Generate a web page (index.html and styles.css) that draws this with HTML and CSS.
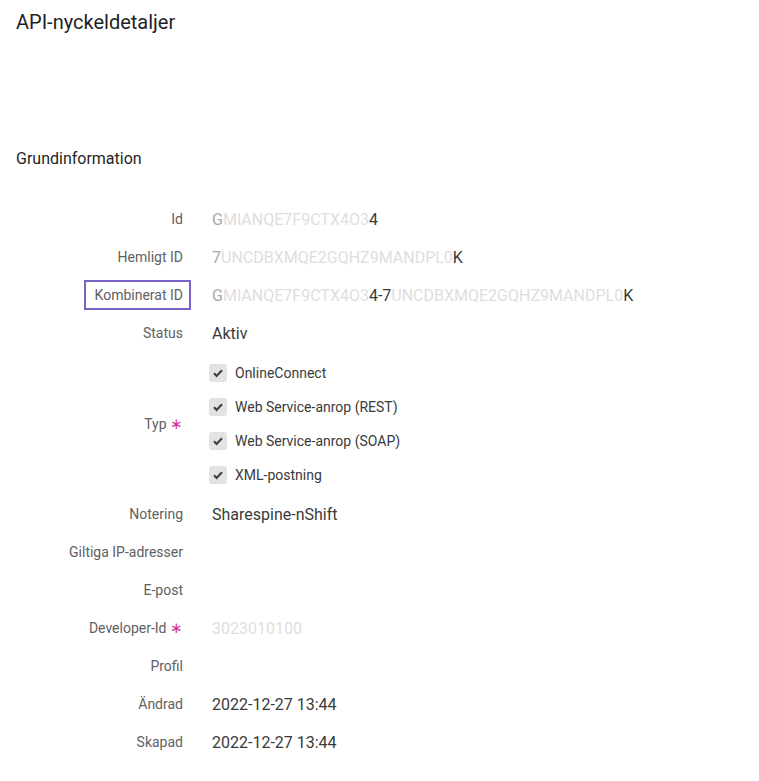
FILE: index.html
```html
<!doctype html>
<html>

<head>
   <meta charset="utf-8">
   <title>API-nyckeldetaljer</title>
   <link rel="stylesheet" href="styles.css">
</head>

<body>
   <div class="page">
      <h1 class="title">API-nyckeldetaljer</h1>

      <h2 class="section">Grundinformation</h2>

      <div class="details">
         <div class="row">
            <div class="label">Id</div>
            <div class="value"><span class="dim">G</span><span class="faint">MIANQE7F9CTX4O3</span>4</div>
         </div>
         <div class="row">
            <div class="label">Hemligt ID</div>
            <div class="value"><span class="dim">7</span><span class="faint">UNCDBXMQE2GQHZ9MANDPL0</span>K</div>
         </div>
         <div class="row">
            <div class="label"><span class="marked">Kombinerat ID</span></div>
            <div class="value"><span class="dim">G</span><span class="faint">MIANQE7F9CTX4O3</span>4-7<span class="faint">UNCDBXMQE2GQHZ9MANDPL0</span>K</div>
         </div>
         <div class="row">
            <div class="label">Status</div>
            <div class="value">Aktiv</div>
         </div>
         <div class="row typ">
            <div class="label">Typ <span class="req">&lowast;</span></div>
            <div class="checks">
               <label class="check"><span class="box"><svg viewBox="0 0 18 18"><path d="M5 9.3l2.6 2.6L13 6.3" /></svg></span>OnlineConnect</label>
               <label class="check"><span class="box"><svg viewBox="0 0 18 18"><path d="M5 9.3l2.6 2.6L13 6.3" /></svg></span>Web Service-anrop (REST)</label>
               <label class="check"><span class="box"><svg viewBox="0 0 18 18"><path d="M5 9.3l2.6 2.6L13 6.3" /></svg></span>Web Service-anrop (SOAP)</label>
               <label class="check"><span class="box"><svg viewBox="0 0 18 18"><path d="M5 9.3l2.6 2.6L13 6.3" /></svg></span>XML-postning</label>
            </div>
         </div>
         <div class="row">
            <div class="label">Notering</div>
            <div class="value">Sharespine-nShift</div>
         </div>
         <div class="row">
            <div class="label">Giltiga IP-adresser</div>
            <div class="value"></div>
         </div>
         <div class="row">
            <div class="label">E-post</div>
            <div class="value"></div>
         </div>
         <div class="row">
            <div class="label">Developer-Id <span class="req">&lowast;</span></div>
            <div class="value"><span class="faint">3023010100</span></div>
         </div>
         <div class="row">
            <div class="label">Profil</div>
            <div class="value"></div>
         </div>
         <div class="row">
            <div class="label">Ändrad</div>
            <div class="value">2022-12-27 13:44</div>
         </div>
         <div class="row">
            <div class="label">Skapad</div>
            <div class="value">2022-12-27 13:44</div>
         </div>
      </div>
   </div>
</body>

</html>
```

FILE: styles.css
```css
html,
body {
   padding: 0;
   margin: 0;
   background: #FFF;
   font-family: Roboto, "Liberation Sans", sans-serif;
   color: #333;
}

.page {
   padding: 10px 16px;
}

.title {
   margin: 0;
   font-size: 20px;
   line-height: 24px;
   font-weight: 400;
   color: #1f1f1f;
}

.section {
   margin: 115px 0 0;
   font-size: 16px;
   line-height: 20px;
   font-weight: 400;
   color: #1f1f1f;
}

.details {
   margin-top: 31px;
}

.row {
   display: grid;
   grid-template-columns: 167px 1fr;
   column-gap: 29px;
   align-items: center;
   min-height: 38px;
}

.row.typ {
   padding: 4px 0 3px;
}

.label {
   text-align: right;
   font-size: 14px;
   color: #616161;
}

.marked {
   position: relative;
}

.marked::after {
   content: "";
   position: absolute;
   left: -11px;
   right: -8px;
   top: -7px;
   bottom: -7px;
   border: 2px solid #7a63c4;
}

.req {
   color: #d6339a;
   font-size: 15px;
}

.value {
   font-size: 16px;
   color: #3a3a3a;
}

.faint {
   color: #dedede;
}

.dim {
   color: #a8a8a8;
}

.checks {
   display: flex;
   flex-direction: column;
   margin-left: -3px;
}

.check {
   display: flex;
   align-items: center;
   gap: 8px;
   height: 34px;
   font-size: 14px;
   color: #3a3a3a;
}

.box {
   display: block;
   width: 18px;
   height: 18px;
   border-radius: 3px;
   background: #e3e3e3;
}

.box svg {
   display: block;
   width: 18px;
   height: 18px;
}

.box path {
   fill: none;
   stroke: #424242;
   stroke-width: 2.2;
}
```
